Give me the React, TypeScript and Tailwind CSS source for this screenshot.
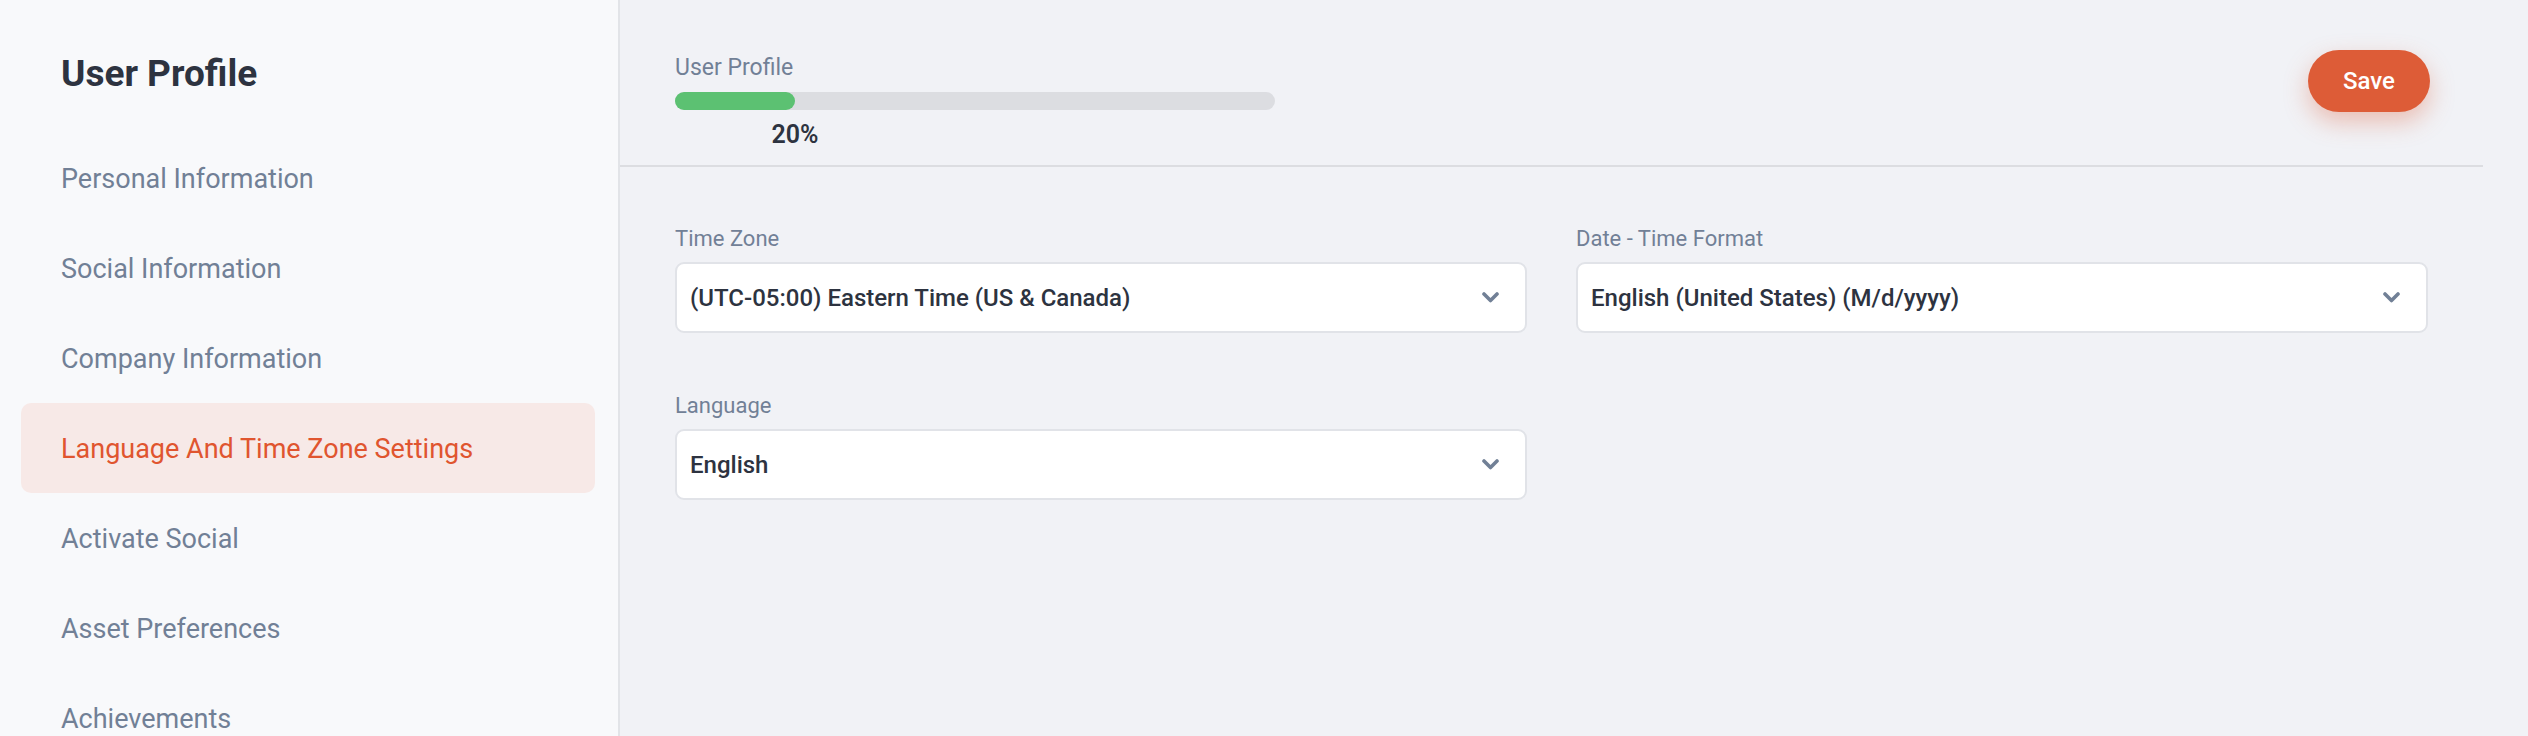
import React from 'react'

const navItems = [
	'Personal Information',
	'Social Information',
	'Company Information',
	'Language And Time Zone Settings',
	'Activate Social',
	'Asset Preferences',
	'Achievements'
]

function Chevron() {
	return (
		<svg width="17" height="11" viewBox="0 0 17 11" fill="none">
			<path d="M2 2l6.5 6.5L15 2" stroke="#718096" strokeWidth="3.6" strokeLinecap="round" strokeLinejoin="round" />
		</svg>
	)
}

function SelectField({ label, value }: { label: string; value: string }) {
	return (
		<div className="flex flex-col">
			<label className="text-[22px] leading-[28px] text-[#718096] mb-[9px]">{label}</label>
			<div className="h-[71px] flex items-center justify-between bg-white border-2 border-[#e1e3e8] rounded-[9px] pl-[13px] pr-[26px]">
				<span className="text-[24px] font-medium text-[#2d3340]">{value}</span>
				<Chevron />
			</div>
		</div>
	)
}

export default function App() {
	const progress = 20

	return (
		<div className="flex h-[736px] w-full overflow-hidden bg-[#f1f2f6]" style={{ fontFamily: 'Roboto, "Noto Sans", sans-serif' }}>
			<aside className="w-[620px] shrink-0 bg-[#f8f9fb] border-r-2 border-[#e2e4e8] pl-[21px] pr-[23px]">
				<h1 className="mt-[52px] h-[44px] leading-[44px] pl-[40px] text-[37px] font-bold text-[#2d3340]">User Profile</h1>
				<nav className="mt-[37px] flex flex-col">
					{navItems.map((item, i) => (
						<div
							key={item}
							className={
								i === 3
									? 'h-[90px] flex items-center pl-[40px] pt-[2px] rounded-[10px] bg-[#f7e9e7] text-[#e0552f] text-[27px]'
									: 'h-[90px] flex items-center pl-[40px] pt-[2px] text-[#718096] text-[27px]'
							}
						>
							{item}
						</div>
					))}
				</nav>
			</aside>

			<main className="flex-1 mr-[45px]">
				<div className="flex items-start justify-between border-b-2 border-[#dcdde1] pl-[55px] pr-[53px] pt-[53px] pb-[15px]">
					<div className="w-[600px]">
						<div className="text-[23px] leading-[30px] text-[#718096]">User Profile</div>
						<div className="mt-[9px] h-[18px] w-full rounded-full bg-[#dcdde1]">
							<div className="h-full rounded-full bg-[#5cc172]" style={{ width: `${progress}%` }} />
						</div>
						<div className="relative mt-[10px] h-[30px]">
							<span
								className="absolute -translate-x-1/2 text-[25px] leading-[30px] font-semibold text-[#2d3340]"
								style={{ left: `${progress}%` }}
							>
								{progress}%
							</span>
						</div>
					</div>
					<button className="mt-[-3px] h-[62px] w-[122px] rounded-full bg-[#dd5c37] text-white text-[24px] font-medium shadow-[0_10px_24px_rgba(221,92,55,0.35)]">
						Save
					</button>
				</div>

				<div className="px-[55px] pt-[58px]">
					<div className="grid grid-cols-2 gap-x-[49px] gap-y-[59px]">
						<SelectField label="Time Zone" value="(UTC-05:00) Eastern Time (US & Canada)" />
						<SelectField label="Date - Time Format" value="English (United States) (M/d/yyyy)" />
						<SelectField label="Language" value="English" />
					</div>
				</div>
			</main>
		</div>
	)
}
